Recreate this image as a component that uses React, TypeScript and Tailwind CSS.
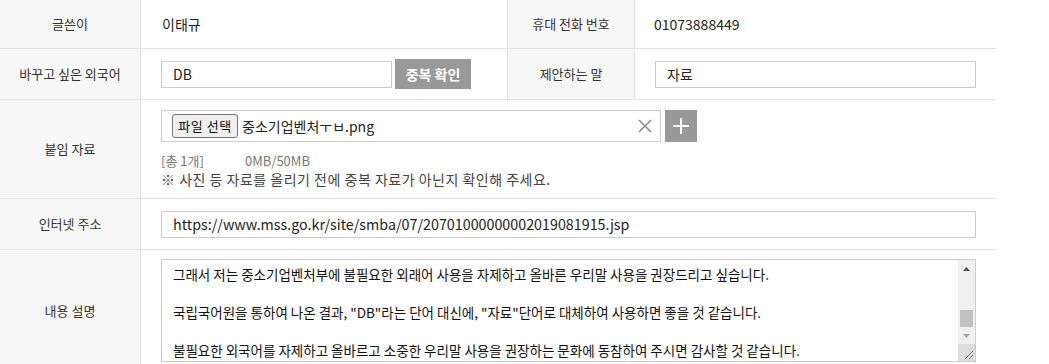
import React from "react";

function Label({ children, className = "" }: { children: React.ReactNode; className?: string }) {
  return (
    <div className={`flex items-center justify-center bg-[#f7f7f7] text-[13px] text-[#333] ${className}`}>
      {children}
    </div>
  );
}

export default function App() {
  return (
    <div className="w-[1049px] h-[364px] overflow-hidden bg-white font-['Noto_Sans_CJK_KR',sans-serif]">
      <div className="w-[996px]">
        {/* Row 1 */}
        <div className="flex h-[49px] border-b border-[#e1e1e1]">
          <Label className="w-[141px] border-r border-[#e1e1e1]">글쓴이</Label>
          <div className="flex w-[366px] items-center pl-[21px] text-[14px] text-[#222]">이태규</div>
          <Label className="w-[128px] border-x border-[#e1e1e1]">휴대 전화 번호</Label>
          <div className="flex flex-1 items-center pl-[19px] text-[14px] text-[#222]">01073888449</div>
        </div>
        {/* Row 2 */}
        <div className="flex h-[51px] border-b border-[#e1e1e1]">
          <Label className="w-[141px] border-r border-[#e1e1e1]">바꾸고 싶은 외국어</Label>
          <div className="flex w-[366px] items-center gap-[3px] pl-[20px]">
            <div className="flex h-[27px] w-[231px] items-center border border-[#cccccc] pl-[11px] text-[14px] text-[#222]">DB</div>
            <div className="flex h-[30px] w-[76px] items-center justify-center bg-[#999999] text-[14px] font-bold text-white">중복 확인</div>
          </div>
          <Label className="w-[128px] border-x border-[#e1e1e1]">제안하는 말</Label>
          <div className="flex flex-1 items-center pl-[20px]">
            <div className="flex h-[27px] w-[321px] items-center border border-[#cccccc] pl-[11px] text-[14px] text-[#222]">자료</div>
          </div>
        </div>
        {/* Row 3 */}
        <div className="flex h-[99px] border-b border-[#e1e1e1]">
          <Label className="w-[141px] border-r border-[#e1e1e1]">붙임 자료</Label>
          <div className="flex flex-1 flex-col pl-[20px] pt-[10px]">
            <div className="flex items-center gap-[4px]">
              <div className="flex h-[32px] w-[500px] items-center border border-[#cccccc] pl-[10px] pr-[8px]">
                <div className="flex h-[24px] w-[66px] items-center justify-center rounded-[3px] border border-[#767676] bg-[#efefef] text-[13px] tracking-[0.5px] text-[#111]">파일 선택</div>
                <span className="ml-[4px] text-[14px] text-[#222]">중소기업벤처ㅜㅂ.png</span>
                <svg className="ml-auto" width="14" height="14" viewBox="0 0 14 14">
                  <path d="M1 1L13 13M13 1L1 13" stroke="#8c8c8c" strokeWidth="1.6" />
                </svg>
              </div>
              <div className="flex h-[32px] w-[32px] items-center justify-center bg-[#999999]">
                <svg width="16" height="16" viewBox="0 0 16 16">
                  <path d="M8 0V16M0 8H16" stroke="#ffffff" strokeWidth="2" />
                </svg>
              </div>
            </div>
            <div className="mt-[9px] flex text-[13px] leading-[19px] text-[#777]">
              <span className="w-[84px]">[총 1개]</span>
              <span>0MB/50MB</span>
            </div>
            <div className="text-[14px] leading-[19px] tracking-[0.5px] text-[#444]">※ 사진 등 자료를 올리기 전에 중복 자료가 아닌지 확인해 주세요.</div>
          </div>
        </div>
        {/* Row 4 */}
        <div className="flex h-[51px] border-b border-[#e1e1e1]">
          <Label className="w-[141px] border-r border-[#e1e1e1]">인터넷 주소</Label>
          <div className="flex flex-1 items-center pl-[20px]">
            <div className="flex h-[27px] w-[815px] items-center border border-[#cccccc] pl-[11px] text-[14.3px] text-[#222]">
              https://www.mss.go.kr/site/smba/07/20701000000002019081915.jsp
            </div>
          </div>
        </div>
        {/* Row 5 */}
        <div className="flex h-[123px]">
          <Label className="w-[141px] border-r border-[#e1e1e1] pb-[1px]">내용 설명</Label>
          <div className="flex flex-1 flex-col pl-[20px] pt-[9px]">
            <div className="flex h-[103px] w-[815px] border border-[#cccccc]">
              <div className="flex-1 pl-[11px] pt-[5px] text-[13.5px] leading-[19px] text-[#111]">
                <div>그래서 저는 중소기업벤처부에 불필요한 외래어 사용을 자제하고 올바른 우리말 사용을 권장드리고 싶습니다.</div>
                <div className="h-[19px]" />
                <div>국립국어원을 통하여 나온 결과, "DB"라는 단어 대신에, "자료"단어로 대체하여 사용하면 좋을 것 같습니다.</div>
                <div className="h-[19px]" />
                <div>불필요한 외국어를 자제하고 올바르고 소중한 우리말 사용을 권장하는 문화에 동참하여 주시면 감사할 것 같습니다.</div>
              </div>
              <div className="flex w-[17px] flex-col bg-[#f0f0f0]">
                <div className="flex h-[17px] items-center justify-center">
                  <svg width="7" height="4" viewBox="0 0 7 4"><path d="M3.5 0L7 4H0Z" fill="#505050" /></svg>
                </div>
                <div className="flex-1" />
                <div className="mx-[2px] h-[17px] bg-[#c1c1c1]" />
                <div className="flex h-[17px] items-center justify-center">
                  <svg width="7" height="4" viewBox="0 0 7 4"><path d="M0 0H7L3.5 4Z" fill="#a3a3a3" /></svg>
                </div>
                <div className="relative h-[17px] bg-[#dcdcdc]">
                  <svg className="absolute bottom-[1px] right-[1px]" width="10" height="10" viewBox="0 0 10 10">
                    <path d="M9 1L1 9M9 5L5 9" stroke="#7a7a7a" strokeWidth="1" />
                  </svg>
                </div>
              </div>
            </div>
          </div>
        </div>
      </div>
    </div>
  );
}
